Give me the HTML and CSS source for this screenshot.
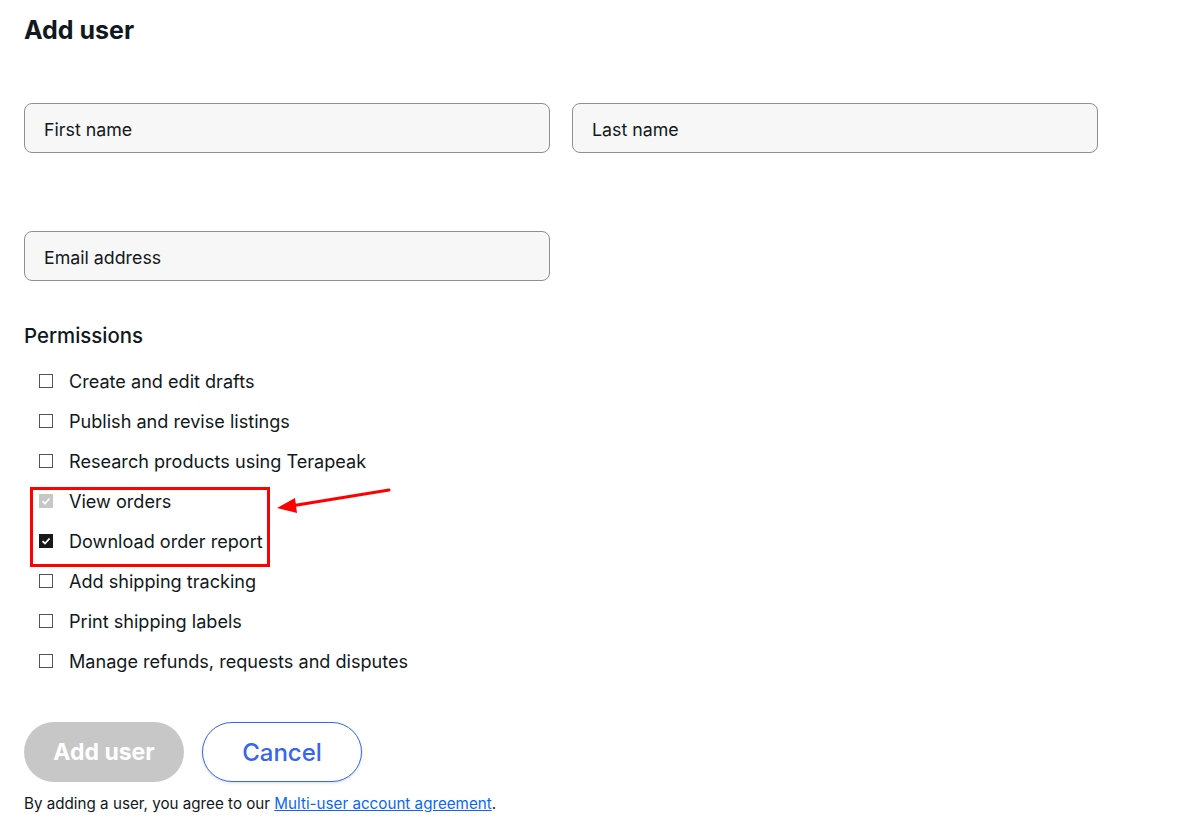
FILE: index.html
```html
<!DOCTYPE html>
<html>
<head>
<meta charset="utf-8">
<link rel="stylesheet" href="styles.css">
</head>
<body>
<div class="page">
  <h1 class="title">Add user</h1>
  <div class="row">
    <div class="field">First name</div>
    <div class="field">Last name</div>
  </div>
  <div class="row row-email">
    <div class="field">Email address</div>
  </div>
  <h2 class="section">Permissions</h2>
  <ul class="perms">
    <li class="perm"><span class="box"></span>Create and edit drafts</li>
    <li class="perm"><span class="box"></span>Publish and revise listings</li>
    <li class="perm"><span class="box"></span>Research products using Terapeak</li>
    <li class="highlight">
      <div class="perm"><span class="box disabled"><svg viewBox="0 0 14 14"><path d="M3.5 7.2 L6 9.5 L10.5 4.5" fill="none" stroke="#fff" stroke-width="1.8"/></svg></span>View orders</div>
      <div class="perm"><span class="box checked"><svg viewBox="0 0 14 14"><path d="M3.5 7.2 L6 9.5 L10.5 4.5" fill="none" stroke="#fff" stroke-width="1.8"/></svg></span>Download order report</div>
      <svg class="arrow" width="130" height="40" viewBox="0 0 130 40"><line x1="118" y1="5" x2="20" y2="21" stroke="#f00" stroke-width="3" stroke-linecap="round"/><polygon points="6,23 24,13 26,28" fill="#f00"/></svg>
    </li>
    <li class="perm"><span class="box"></span>Add shipping tracking</li>
    <li class="perm"><span class="box"></span>Print shipping labels</li>
    <li class="perm"><span class="box"></span>Manage refunds, requests and disputes</li>
  </ul>
  <div class="actions">
    <button class="btn btn-primary">Add user</button>
    <button class="btn btn-secondary">Cancel</button>
  </div>
  <p class="legal">By adding a user, you agree to our <a href="#">Multi-user account agreement</a>.</p>
</div>
</body>
</html>
```
FILE: styles.css
```css
* { box-sizing: border-box; }
body {
  margin: 0;
  background: #fff;
  font-family: Inter, "Liberation Sans", Arial, sans-serif;
  color: #111820;
}
.page {
  padding: 16px 24px 0 24px;
}
.title {
  margin: 0;
  font-size: 25px;
  font-weight: 700;
  line-height: 28px;
}
.row {
  display: flex;
  gap: 22px;
  margin-top: 59px;
}
.row-email { margin-top: 78px; }
.field {
  width: 526px;
  height: 50px;
  border: 1px solid #8f8f8f;
  border-radius: 8px;
  background: #f7f7f7;
  padding: 3px 0 0 19px;
  display: flex;
  align-items: center;
  font-size: 17.8px;
  color: #111820;
}
.section {
  margin: 43px 0 0 0;
  font-size: 20.4px;
  font-weight: 500;
  line-height: 24px;
}
.perms {
  list-style: none;
  margin: 13px 0 0 0;
  padding: 0;
}
.perm {
  height: 40px;
  display: flex;
  align-items: center;
  font-size: 18.1px;
}
.box {
  width: 14px;
  height: 14px;
  border: 1px solid #555;
  margin: 0 16px 0 15px;
  display: inline-flex;
  flex: none;
}
.box svg { width: 14px; height: 14px; display: block; margin: -1px; }
.box.checked { background: #191919; border-color: #191919; }
.box.disabled { background: #c7c7c7; border-color: #c7c7c7; }
.highlight {
  position: relative;
  margin-left: 6px;
  width: 240px;
  border: 3px solid #f00;
  margin-top: 6px;
  margin-bottom: -6px;
  height: 80px;
}
.highlight .perm {
  margin-left: -9px;
  height: 40px;
  margin-top: -9px;
  margin-bottom: 9px;
}
.highlight .perm + .perm { margin-top: -9px; }
.arrow {
  position: absolute;
  left: 238px;
  top: -5px;
}
.actions {
  display: flex;
  gap: 18px;
  margin-top: 41px;
}
.btn {
  width: 160px;
  height: 60px;
  border-radius: 30px;
  font-family: Inter, "Liberation Sans", Arial, sans-serif;
  font-size: 23px;
  cursor: pointer;
}
.btn-primary {
  background: #c7c7c7;
  border: none;
  color: #fff;
  font-weight: 700;
}
.btn-secondary {
  background: #fff;
  border: 1px solid #3665f3;
  color: #3665f3;
  font-weight: 500;
  font-size: 24px;
  box-shadow: 0 1px 3px rgba(0,0,0,0.15);
}
.legal {
  margin: 12px 0 0 0;
  font-size: 15.2px;
  color: #111820;
}
.legal a { color: #0968f6; }
```
